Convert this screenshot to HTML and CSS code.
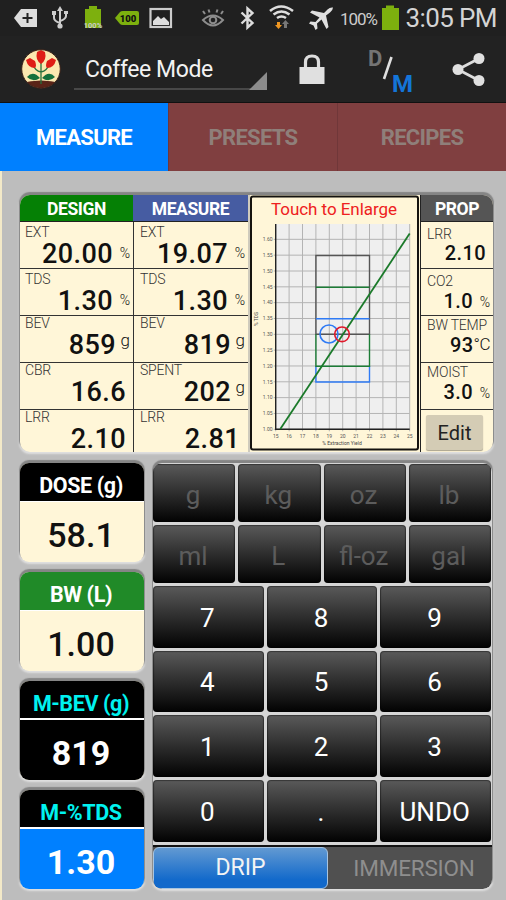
FILE: index.html
```
<!DOCTYPE html>
<html>
<head>
    <meta charset="utf-8">
    <title>Coffee Mode</title>
    <link rel="stylesheet" href="styles.css">
</head>
<body>
    <!-- Status bar -->
    <div class="status-bar">
        <svg class="status-icons" width="506" height="36" viewBox="0 0 506 36">
            <path d="M14 18l7-9h16v18H21z" fill="#ddd"/>
            <path d="M27.500 13v10M22.500 18h10" stroke="#222" stroke-width="2"/>
            <g stroke="#ccc" stroke-width="2" fill="none">
                <path d="M60 10v16M54 14v4q0 3 6 5M66 13v3q0 3-6 5"/>
                <path d="M60 6l3 5h-6zM52 11h4v4h-4zM64 11h4v3h-4z" fill="#ccc" stroke="none"/>
                <circle cx="60" cy="26" r="2.600" fill="#ccc" stroke="none"/>
            </g>
            <path d="M85 9h4V6h8v3h4v19H85z" fill="#7db00e"/>
            <text x="93" y="28" class="tiny-pct">100%</text>
            <path d="M115 18l5-6q1-1 3-1h14q2 0 2 2v10q0 2-2 2h-14q-2 0-3-1z" fill="#7db00e"/>
            <text x="128" y="21.500" class="pill-text">100</text>
            <rect x="150.500" y="9" width="20.500" height="18" fill="none" stroke="#ccc" stroke-width="2.200"/>
            <path d="M153 25v-4l5-5 3 3 3-2 5 5v3z" fill="#ddd"/>
            <g fill="none" stroke="#8d8d8d" stroke-width="2">
                <path d="M203 20q10-9 20 0q-10 11-20 0zM205 14l-2-3M209.500 12.500l-1-3M216.500 12.500l1-3M221 14l2-3"/>
                <circle cx="213" cy="20" r="3.300"/>
            </g>
            <path d="M241.500 12.500l11 10.500-5 4.500V8.500l5 4.500-11 10.500" fill="none" stroke="#ddd" stroke-width="2.400"/>
            <path d="M270 11q11-9 23 0M273.500 14.500q8-6 16 0M277 18q4.500-3 9 0" fill="none" stroke="#ddd" stroke-width="2.600"/>
            <path d="M277 22h3v3h2l-3.500 4-3.500-4h2z" fill="#ef9722"/>
            <path d="M284 28v-4h-2l3.500-4 3.500 4h-2v4z" fill="#777"/>
            <path d="M333 7.500q-3-.5-5.500 2L324 13l-12-2.500-2 2 9.500 5-4 4.500-5-.5-1.500 2 4.500 2 2 4.500 2-1.500-.5-5 4.500-4 5 9.500 2-2L326 15.500l4-3q3-2.500 3-5z" fill="#e0e0e0"/>
            <text x="340" y="25" class="battery-text" textLength="38">100%</text>
            <path d="M382 8h4V5.500h8V8h5v22h-17z" fill="#7db00e"/>
            <text x="405.500" y="27" class="clock" textLength="92">3:05 PM</text>
        </svg>
    </div>

    <!-- Action bar -->
    <div class="action-bar">
        <svg class="logo" width="40" height="40" viewBox="0 0 40 40">
            <defs><clipPath id="disc"><circle cx="20" cy="20" r="19.300"/></clipPath></defs>
            <g clip-path="url(#disc)">
                <rect width="40" height="40" fill="#fbe8b0"/>
                <path d="M0 34q20-5 40 0v6H0z" fill="#5a2418"/>
                <path d="M20 12v23M20 23q-6-1-9-9M20 23q6-1 9-9" fill="none" stroke="#28713d" stroke-width="1.300"/>
                <path d="M19 29q-7 5-13-1q6-7 13 1zM21 29q7 5 13-1q-6-7-13 1z" fill="#16713c"/>
                <path d="M16 3l4-2 4 2q2 8-4 12q-6-4-4-12zM5 11l4-2 5 3q2 5 0 7q-7 0-9-8zM35 11l-4-2-5 3q-2 5 0 7q7 0 9-8z" fill="#df1d16"/>
            </g>
            <circle cx="20" cy="20" r="19.300" fill="none" stroke="#3a2118" stroke-width="1"/>
        </svg>
        <div class="spinner">
            <span>Coffee Mode</span>
            <svg class="corner" width="18" height="18"><path d="M18 0v18H0z" fill="#8c8c8c"/></svg>
        </div>
        <svg class="lock" width="26" height="30" viewBox="0 0 26 30">
            <path d="M6.500 14V8q0-6 6.500-6t6.500 6v6" fill="none" stroke="#ddd" stroke-width="3.200"/>
            <rect x="0.500" y="13" width="25" height="17" fill="#e0e0e0"/>
        </svg>
        <svg class="dm" width="48" height="50" viewBox="0 0 48 50">
            <text x="0" y="19.500" class="d">D</text>
            <path d="M23.500 11L16 33" stroke="#e0e0e0" stroke-width="2.600"/>
            <text x="24" y="45.500" class="m">M</text>
        </svg>
        <svg class="share" width="34" height="36" viewBox="0 0 34 36">
            <path d="M27 6.500L6 17.500l21 11" fill="none" stroke="#ddd" stroke-width="2.800"/>
            <circle cx="27" cy="6.500" r="5.500" fill="#e0e0e0"/>
            <circle cx="6" cy="17.500" r="5.500" fill="#e0e0e0"/>
            <circle cx="27" cy="28.500" r="5.500" fill="#e0e0e0"/>
        </svg>
    </div>

    <div class="tabs">
        <div class="tab active">MEASURE</div>
        <div class="tab">PRESETS</div>
        <div class="tab">RECIPES</div>
    </div>

    <div class="main">
        <!-- Results -->
        <div class="results">
            <div class="column">
                <div class="column-head green">DESIGN</div>
                <div class="cell low"><label>EXT</label><div class="value">20.00<i>%</i></div></div>
                <div class="cell low"><label>TDS</label><div class="value">1.30<i>%</i></div></div>
                <div class="cell"><label>BEV</label><div class="value gram">859<i>g</i></div></div>
                <div class="cell"><label>CBR</label><div class="value bare">16.6</div></div>
                <div class="cell"><label>LRR</label><div class="value bare">2.10</div></div>
            </div>
            <div class="column measure">
                <div class="column-head blue">MEASURE</div>
                <div class="cell low"><label>EXT</label><div class="value">19.07<i>%</i></div></div>
                <div class="cell low"><label>TDS</label><div class="value">1.30<i>%</i></div></div>
                <div class="cell"><label>BEV</label><div class="value gram">819<i>g</i></div></div>
                <div class="cell"><label>SPENT</label><div class="value gram">202<i>g</i></div></div>
                <div class="cell"><label>LRR</label><div class="value bare">2.81</div></div>
            </div>
            <div class="chart">
                <svg width="170" height="257" viewBox="250 195 170 257">
                    <rect x="251" y="196.500" width="167" height="253" rx="2" fill="#fff6d8" stroke="#15130f" stroke-width="2"/>
                    <text x="334" y="214.500" class="chart-title" textLength="126">Touch to Enlarge</text>
                    <rect x="275.700" y="224" width="134" height="205.300" fill="#efefef"/>
                    <g id="grid" stroke="#b4b4b4" stroke-width="1"></g>
                    <path d="M275.700 224v205.300h134" fill="none" stroke="#222" stroke-width="1.400"/>
                    <g id="labels" class="axis"></g>
                    <text x="342" y="444.500" class="axis-title">% Extraction Yield</text>
                    <text x="258" y="319" class="axis-title" transform="rotate(-90 258 319)">% TDS</text>
                    <g fill="none" stroke-width="1.400">
                        <path d="M315.900 334.300V255.500h53.600v78.800z" stroke="#555"/>
                        <path d="M315.900 318.700h53.600M315.900 366v16h53.600v-16" stroke="#2f7bf5"/>
                        <path d="M315.900 287.200h53.600M315.900 334.300v32h53.600v-32" stroke="#1c7c36"/>
                        <path d="M280.300 429L409.700 233.500" stroke="#1b7a2a" stroke-width="1.800"/>
                        <circle cx="329" cy="334" r="9" stroke="#2f7bf5" stroke-width="1.600"/>
                        <circle cx="342" cy="334.300" r="7.300" stroke="#e0182a" stroke-width="1.600"/>
                    </g>
                </svg>
            </div>
            <div class="column prop">
                <div class="column-head gray">PROP</div>
                <div class="cell low"><label>LRR</label><div class="value wide">2.10</div></div>
                <div class="cell low"><label>CO2</label><div class="value">1.0<i>%</i></div></div>
                <div class="cell"><label>BW TEMP</label><div class="value degree">93<i>°C</i></div></div>
                <div class="cell"><label>MOIST</label><div class="value">3.0<i>%</i></div></div>
                <div class="cell edit"><div class="edit-button">Edit</div></div>
            </div>
        </div>

        <div class="bottom">
            <div class="inputs">
                <div class="input-box">
                    <div class="input-head">DOSE (g)</div>
                    <div class="input-value">58.1</div>
                </div>
                <div class="input-box bw">
                    <div class="input-head">BW (L)</div>
                    <div class="input-value">1.00</div>
                </div>
                <div class="input-box bev">
                    <div class="input-head">M-BEV (g)</div>
                    <div class="input-value">819</div>
                </div>
                <div class="input-box tds">
                    <div class="input-head">M-%TDS</div>
                    <div class="input-value">1.30</div>
                </div>
            </div>

            <div class="keypad">
                <div class="row units">
                    <div class="key">g</div><div class="key">kg</div><div class="key">oz</div><div class="key">lb</div>
                </div>
                <div class="row units">
                    <div class="key">ml</div><div class="key">L</div><div class="key">fl-oz</div><div class="key">gal</div>
                </div>
                <div class="row">
                    <div class="key">7</div><div class="key">8</div><div class="key">9</div>
                </div>
                <div class="row">
                    <div class="key">4</div><div class="key">5</div><div class="key">6</div>
                </div>
                <div class="row">
                    <div class="key">1</div><div class="key">2</div><div class="key">3</div>
                </div>
                <div class="row">
                    <div class="key">0</div><div class="key">.</div><div class="key">UNDO</div>
                </div>
                <div class="toggle">
                    <div class="drip">DRIP</div>
                    <div class="immersion">IMMERSION</div>
                </div>
            </div>
        </div>
    </div>

    <script>
        // Chart grid and axis labels
        const left = 275.7, right = 409.7, top0 = 224, bottom = 429.3;
        const stepX = 13.4, stepY = 15.83;
        let grid = "";
        let labels = "";

        for (let i = 0; i <= 10; i++) {
            const x = left + i * stepX;
            grid += `<path d="M${x} ${top0}V${bottom + 2}"/>`;
            labels += `<text x="${x}" y="437.500" text-anchor="middle">${15 + i}</text>`;
        }
        for (let i = 0; i <= 12; i++) {
            const y = bottom - i * stepY;
            grid += `<path d="M${left - 2} ${y}H${right}"/>`;
            labels += `<text x="272.500" y="${y + 1.8}" text-anchor="end">${(1 + i * 0.05).toFixed(2)}</text>`;
        }
        document.getElementById("grid").innerHTML = grid;
        document.getElementById("labels").innerHTML = labels;
    </script>
</body>
</html>
```

FILE: styles.css
```
* {
    box-sizing: border-box;
}

body {
    margin: 0;
    width: 506px;
    height: 900px;
    overflow: hidden;
    font-family: Roboto, "Liberation Sans", sans-serif;
    background-color: #222;
}

svg {
    display: block;
    overflow: visible;
}

/* Status bar */
.status-bar {
    height: 36px;
    background-color: #202020;
}

.tiny-pct {
    font-size: 7.5px;
    font-weight: bold;
    fill: #ccc;
    text-anchor: middle;
}

.pill-text {
    font-size: 9.5px;
    font-weight: 900;
    text-anchor: middle;
    fill: #111;
}

.battery-text {
    font-size: 17px;
    fill: #ccc;
}

.clock {
    font-size: 26px;
    fill: #d4d4d4;
}

/* Action bar */
.action-bar {
    height: 67px;
    display: flex;
    background-color: #222;
    border-bottom: 1px solid #111;
}

.logo {
    margin: 13px 0 0 21px;
}

.spinner {
    display: flex;
    justify-content: space-between;
    align-items: flex-end;
    width: 193px;
    height: 36px;
    margin: 18px 0 0 13px;
    padding-left: 11px;
    border-bottom: 2px solid #484848;
    color: #f2f2f2;
    font-size: 23px;
    line-height: 36px;
}

.spinner span {
    letter-spacing: -0.4px;
}

.corner {
    margin-bottom: -2px;
}

.lock {
    margin: 18px 0 0 32px;
}

.dm {
    margin: 10px 0 0 43px;
    font-weight: bold;
}

.dm .d {
    font-size: 22px;
    fill: #747474;
}

.dm .m {
    font-size: 24px;
    fill: #1475d8;
}

.share {
    margin: 16px 0 0 36px;
}

/* Tabs */
.tabs {
    height: 68px;
    display: flex;
}

.tab {
    flex: 1;
    line-height: 70px;
    text-align: center;
    font-size: 22px;
    letter-spacing: -0.7px;
    font-weight: bold;
    color: #8f7f7a;
    background-color: #803f40;
    border-left: 1px solid #703739;
}

.tab.active {
    color: #fff;
    background-color: #0080ff;
    border-left: none;
}

.main {
    height: 729px;
    padding: 24px 14px 11px 18px;
    background-color: #bdbdbd;
    border-left: 2px solid #f3e9c8;
}

/* Results */
.results {
    display: flex;
    width: 473px;
    height: 257px;
    overflow: hidden;
    border-radius: 10px;
    background-color: #fff6d8;
    box-shadow: 0 -2px 1px 1px #858585, 0 1px 2px 1px #e0e0e0;
}

.column {
    width: 113px;
    flex: none;
}

.column.measure {
    width: 117px;
    border-right: 2px solid #cfcbbd;
}

.column-head {
    height: 27px;
    line-height: 28px;
    text-align: center;
    color: #fff;
    font-size: 17.5px;
    letter-spacing: -0.4px;
    font-weight: bold;
    border-bottom: 1px solid #222;
}

.green {
    background-color: #058005;
}

.blue {
    background-color: #465ca2;
}

.gray {
    background-color: #555;
}

.cell {
    height: 47px;
    padding-left: 5px;
    border-bottom: 1.5px solid #333;
    color: #111;
}

.cell:last-child {
    height: 42px;
    border-bottom: none;
}

.measure .cell {
    border-left: 1px solid #333;
    padding-left: 6px;
}

.cell label {
    display: block;
    height: 15px;
    line-height: 15px;
    font-size: 14px;
    font-weight: 300;
    letter-spacing: -0.2px;
    color: #333;
}

.cell.low label {
    height: 18px;
    padding-top: 3px;
}

.value {
    display: flex;
    justify-content: flex-end;
    height: 27px;
    line-height: 29px;
    padding-right: 3px;
    font-size: 27px;
    font-weight: 500;
    letter-spacing: 0.4px;
}

.value i {
    width: 17px;
    text-align: right;
    font-size: 14px;
    line-height: 26px;
    font-style: normal;
    font-weight: 300;
    letter-spacing: 0;
}

.value.gram i {
    width: 14px;
    font-size: 17px;
    line-height: 19px;
}

.value.bare {
    padding-right: 7px;
}

.measure .value.bare {
    padding-right: 8px;
}

.chart {
    width: 170px;
    flex: none;
}

.chart-title {
    font-size: 17px;
    fill: #ee2020;
    text-anchor: middle;
}

.axis {
    font-size: 5px;
    fill: #555;
}

.axis-title {
    font-size: 5px;
    fill: #444;
    text-anchor: middle;
}

.prop {
    width: 73px;
    border-left: 1px solid #222;
}

.prop .cell {
    padding-left: 6px;
    padding-top: 2px;
}

.prop .value {
    font-size: 20px;
    line-height: 25px;
    padding-right: 3px;
}

.prop .value.wide {
    line-height: 22px;
    padding-right: 7px;
}

.prop .value i {
    line-height: 26px;
}

.prop .value.degree i {
    width: auto;
    font-size: 17px;
    line-height: 22px;
    letter-spacing: -0.5px;
}

.edit-button {
    width: 57px;
    height: 35px;
    margin-left: -1px;
    line-height: 37px;
    text-align: center;
    font-size: 20px;
    color: #222;
    background-color: #d4ccb5;
    border-radius: 2px;
    box-shadow: 0 1px 1px #aaa38e;
}

.prop .cell.edit {
    padding-top: 5px;
}

/* Input boxes */
.bottom {
    display: flex;
    justify-content: space-between;
    width: 472px;
    margin-top: 11px;
}

.inputs {
    display: flex;
    flex-direction: column;
    gap: 10px;
    width: 124px;
}

.input-box {
    height: 99px;
    overflow: hidden;
    border-radius: 9px;
    text-align: center;
    background-color: #fff6d8;
    box-shadow: 0 -2px 1px 1px #858585, 0 1px 2px 1px #e0e0e0;
}

.input-head {
    height: 39px;
    line-height: 45px;
    padding-right: 2px;
    color: #fff;
    font-size: 21.5px;
    letter-spacing: -0.4px;
    font-weight: bold;
    background-color: #000;
    border-bottom: 1px solid #fff;
}

.input-value {
    height: 60px;
    line-height: 66px;
    padding-right: 2px;
    color: #111;
    font-size: 34px;
    font-weight: 500;
}

.bw .input-head {
    background-color: #208a28;
}

.bev .input-head,
.tds .input-head {
    color: #00f2ef;
    border-bottom: 2px solid #fff;
}

.bev .input-value {
    color: #fff;
    font-weight: bold;
    background-color: #000;
}

.tds .input-value {
    color: #fff;
    font-weight: bold;
    background-color: #0080ff;
}

/* Keypad */
.keypad {
    display: flex;
    flex-direction: column;
    gap: 3px;
    width: 339px;
    height: 426px;
    padding-top: 1px;
    overflow: hidden;
    border-radius: 9px;
    background-color: #d5d5d5;
    box-shadow: 0 -2px 1px 1px #858585, 0 1px 2px 1px #e0e0e0;
}

.row {
    display: flex;
    gap: 3px;
    height: 62px;
    padding-right: 1px;
}

.row.units {
    height: 58px;
}

.key {
    flex: 1 1 0;
    display: flex;
    align-items: center;
    justify-content: center;
    padding-top: 2px;
    padding-right: 2px;
    color: #fff;
    font-size: 26px;
    background: linear-gradient(#5a5a5a, #292929 55%, #020202);
    border-radius: 4px;
    box-shadow: inset 0 0 1px 1px rgba(0, 0, 0, 0.4);
}

.units .key {
    color: #5c5c5c;
    padding-top: 5px;
}

.toggle {
    display: flex;
    height: 44px;
    border-top: 2px solid #111;
    border-radius: 0 0 9px 9px;
    background-color: #505050;
    overflow: hidden;
}

.drip {
    width: 175px;
    line-height: 40px;
    text-align: center;
    color: #f4f4f4;
    font-size: 23px;
    background: linear-gradient(#6299d2, #1269cb 80%);
    border: 1px solid #a8c4df;
    border-radius: 6px;
}

.immersion {
    flex: 1;
    padding-left: 8px;
    line-height: 42px;
    text-align: center;
    color: #8e8e8e;
    font-size: 22.5px;
    letter-spacing: -0.2px;
}
```
